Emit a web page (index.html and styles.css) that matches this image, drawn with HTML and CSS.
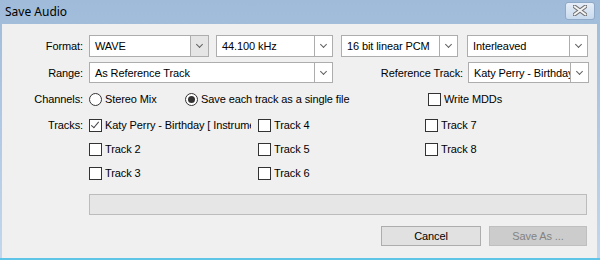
FILE: index.html
```html
<!DOCTYPE html>
<html lang="en">
<head>
  <meta charset="UTF-8" />
  <title>Save Audio</title>
  <link rel="stylesheet" href="styles.css">
</head>
<body>
  <div class="window">
    <div class="titlebar">
      <span class="title">Save Audio</span>
      <div class="close-btn">
        <svg width="14" height="11" viewBox="0 0 14 11">
          <path d="M1.5 1.5 L12.5 9.5 M12.5 1.5 L1.5 9.5" stroke="#6f6f6f" stroke-width="4" stroke-linecap="round"/>
          <path d="M1.5 1.5 L12.5 9.5 M12.5 1.5 L1.5 9.5" stroke="#f4f4f4" stroke-width="2" stroke-linecap="round"/>
        </svg>
      </div>
    </div>

    <div class="content">
      <div class="row row-format">
        <label class="lbl">Format:</label>
        <div class="combo w-format focus"><span>WAVE</span><i class="arrow"></i></div>
        <div class="combo w-rate"><span>44.100 kHz</span><i class="arrow"></i></div>
        <div class="combo w-bits"><span>16 bit linear PCM</span><i class="arrow"></i></div>
        <div class="combo w-inter"><span>Interleaved</span><i class="arrow"></i></div>
      </div>

      <div class="row row-range">
        <label class="lbl">Range:</label>
        <div class="combo w-range"><span>As Reference Track</span><i class="arrow"></i></div>
        <label class="ref-lbl">Reference Track:</label>
        <div class="combo w-inter"><span>Katy Perry - Birthday [ Instrumental ]</span><i class="arrow"></i></div>
      </div>

      <div class="row row-channels">
        <label class="lbl">Channels:</label>
        <div class="radio-item stereo"><i class="radio"></i>Stereo Mix</div>
        <div class="radio-item single"><i class="radio on"></i>Save each track as a single file</div>
        <div class="check-item mdds"><i class="check"></i>Write MDDs</div>
      </div>

      <div class="row row-tracks">
        <label class="lbl">Tracks:</label>
        <div class="tracks">
          <div class="check-item"><i class="check on"></i><span class="clip">Katy Perry - Birthday [ Instrumental ]</span></div>
          <div class="check-item"><i class="check"></i>Track 4</div>
          <div class="check-item"><i class="check"></i>Track 7</div>
          <div class="check-item"><i class="check"></i>Track 2</div>
          <div class="check-item"><i class="check"></i>Track 5</div>
          <div class="check-item"><i class="check"></i>Track 8</div>
          <div class="check-item"><i class="check"></i>Track 3</div>
          <div class="check-item"><i class="check"></i>Track 6</div>
          <div></div>
        </div>
      </div>

      <div class="progress"></div>

      <div class="buttons">
        <div class="btn">Cancel</div>
        <div class="btn disabled">Save As ...</div>
      </div>
    </div>
  </div>
  <div class="below"></div>
</body>
</html>
```

FILE: styles.css
```css
body {
  margin: 0;
  padding: 0;
  background: #ffffff;
  font-family: "Liberation Sans", Arial, sans-serif;
  font-size: 11px;
  letter-spacing: -0.1px;
  color: #000;
}

.window {
  width: 600px;
  height: 260px;
  box-sizing: border-box;
  background: linear-gradient(#9fbbd9, #c2d7ee);
  border-bottom: 2px solid #5ec5e8;
  display: flex;
  flex-direction: column;
}

.titlebar {
  height: 24px;
  display: flex;
  align-items: center;
  justify-content: space-between;
  padding: 0 5px 0 5px;
}

.title {
  font-family: "Noto Sans", "Open Sans", sans-serif;
  font-size: 12px;
  letter-spacing: 0;
  margin-top: -2px;
}

.close-btn {
  width: 28px;
  height: 16px;
  margin-top: -3px;
  border: 1px solid #8fa9c6;
  border-radius: 3px;
  background: linear-gradient(#e6eef8, #c9daee);
  display: flex;
  align-items: center;
  justify-content: center;
}

.content {
  flex: 1;
  margin: 0 3px 0 2px;
  background: #f0f0f0;
  padding-top: 11px;
}

.row {
  display: flex;
  align-items: center;
}

.lbl {
  width: 81px;
  text-align: right;
  margin-right: 6px;
  flex-shrink: 0;
}

/* combo boxes */
.combo {
  height: 22px;
  box-sizing: border-box;
  border: 1px solid #adadad;
  background: #fff;
  display: flex;
  align-items: center;
  overflow: hidden;
  white-space: nowrap;
}

.combo span {
  flex: 1;
  padding-left: 5px;
  overflow: hidden;
}

.combo .arrow {
  width: 17px;
  height: 20px;
  flex-shrink: 0;
  border-left: 1px solid #adadad;
  background: #fff;
  position: relative;
}

.combo .arrow::after {
  content: "";
  position: absolute;
  left: 6px;
  top: 6px;
  width: 4px;
  height: 4px;
  border-right: 1px solid #606060;
  border-bottom: 1px solid #606060;
  transform: rotate(45deg);
}

.combo.focus .arrow {
  background: #e5e5e5;
}

.w-format { width: 120px; margin-right: 7px; }
.w-rate { width: 117px; margin-right: 8px; }
.w-bits { width: 117px; margin-right: 9px; }
.w-inter { width: 121px; }
.w-range { width: 244px; }

.row-range {
  margin-top: 5px;
}

.row-range .combo {
  height: 21px;
}

.ref-lbl {
  width: 130px;
  text-align: right;
  margin-right: 5px;
}

/* radios and checks */
.row-channels {
  margin-top: 5px;
  height: 22px;
}

.radio-item,
.check-item {
  display: flex;
  align-items: center;
  white-space: nowrap;
}

.radio {
  width: 13px;
  height: 13px;
  box-sizing: border-box;
  border: 1px solid #333;
  border-radius: 50%;
  background: #fff;
  margin-right: 3px;
  position: relative;
}

.radio.on::after {
  content: "";
  position: absolute;
  left: 2px;
  top: 2px;
  width: 7px;
  height: 7px;
  border-radius: 50%;
  background: #333;
}

.stereo { width: 96px; }
.single { width: 243px; }

.check {
  width: 13px;
  height: 13px;
  box-sizing: border-box;
  border: 1px solid #333;
  background: #fff;
  margin-right: 3px;
  flex-shrink: 0;
  position: relative;
}

.check.on::after {
  content: "";
  position: absolute;
  left: 3px;
  top: 0px;
  width: 3px;
  height: 7px;
  border-right: 1px solid #444;
  border-bottom: 1px solid #444;
  transform: rotate(40deg);
}

.row-tracks {
  align-items: flex-start;
  margin-top: 3px;
}

.row-tracks .lbl {
  line-height: 24px;
}

.tracks {
  display: grid;
  grid-template-columns: 169px 167px 160px;
  grid-auto-rows: 24px;
}

.clip {
  width: 146px;
  overflow: hidden;
}

.progress {
  margin: 9px 0 0 87px;
  width: 498px;
  height: 21px;
  box-sizing: border-box;
  border: 1px solid #bcbcbc;
  background: #e6e6e6;
}

.buttons {
  display: flex;
  justify-content: flex-end;
  gap: 8px;
  margin: 11px 10px 0 0;
}

.btn {
  width: 100px;
  height: 20px;
  box-sizing: border-box;
  border: 1px solid #adadad;
  background: #e1e1e1;
  display: flex;
  align-items: center;
  justify-content: center;
}

.btn.disabled {
  width: 98px;
  background: #cccccc;
  border-color: #bfbfbf;
  color: #838383;
}

.below {
  height: 2px;
  background: #fff;
}
```
